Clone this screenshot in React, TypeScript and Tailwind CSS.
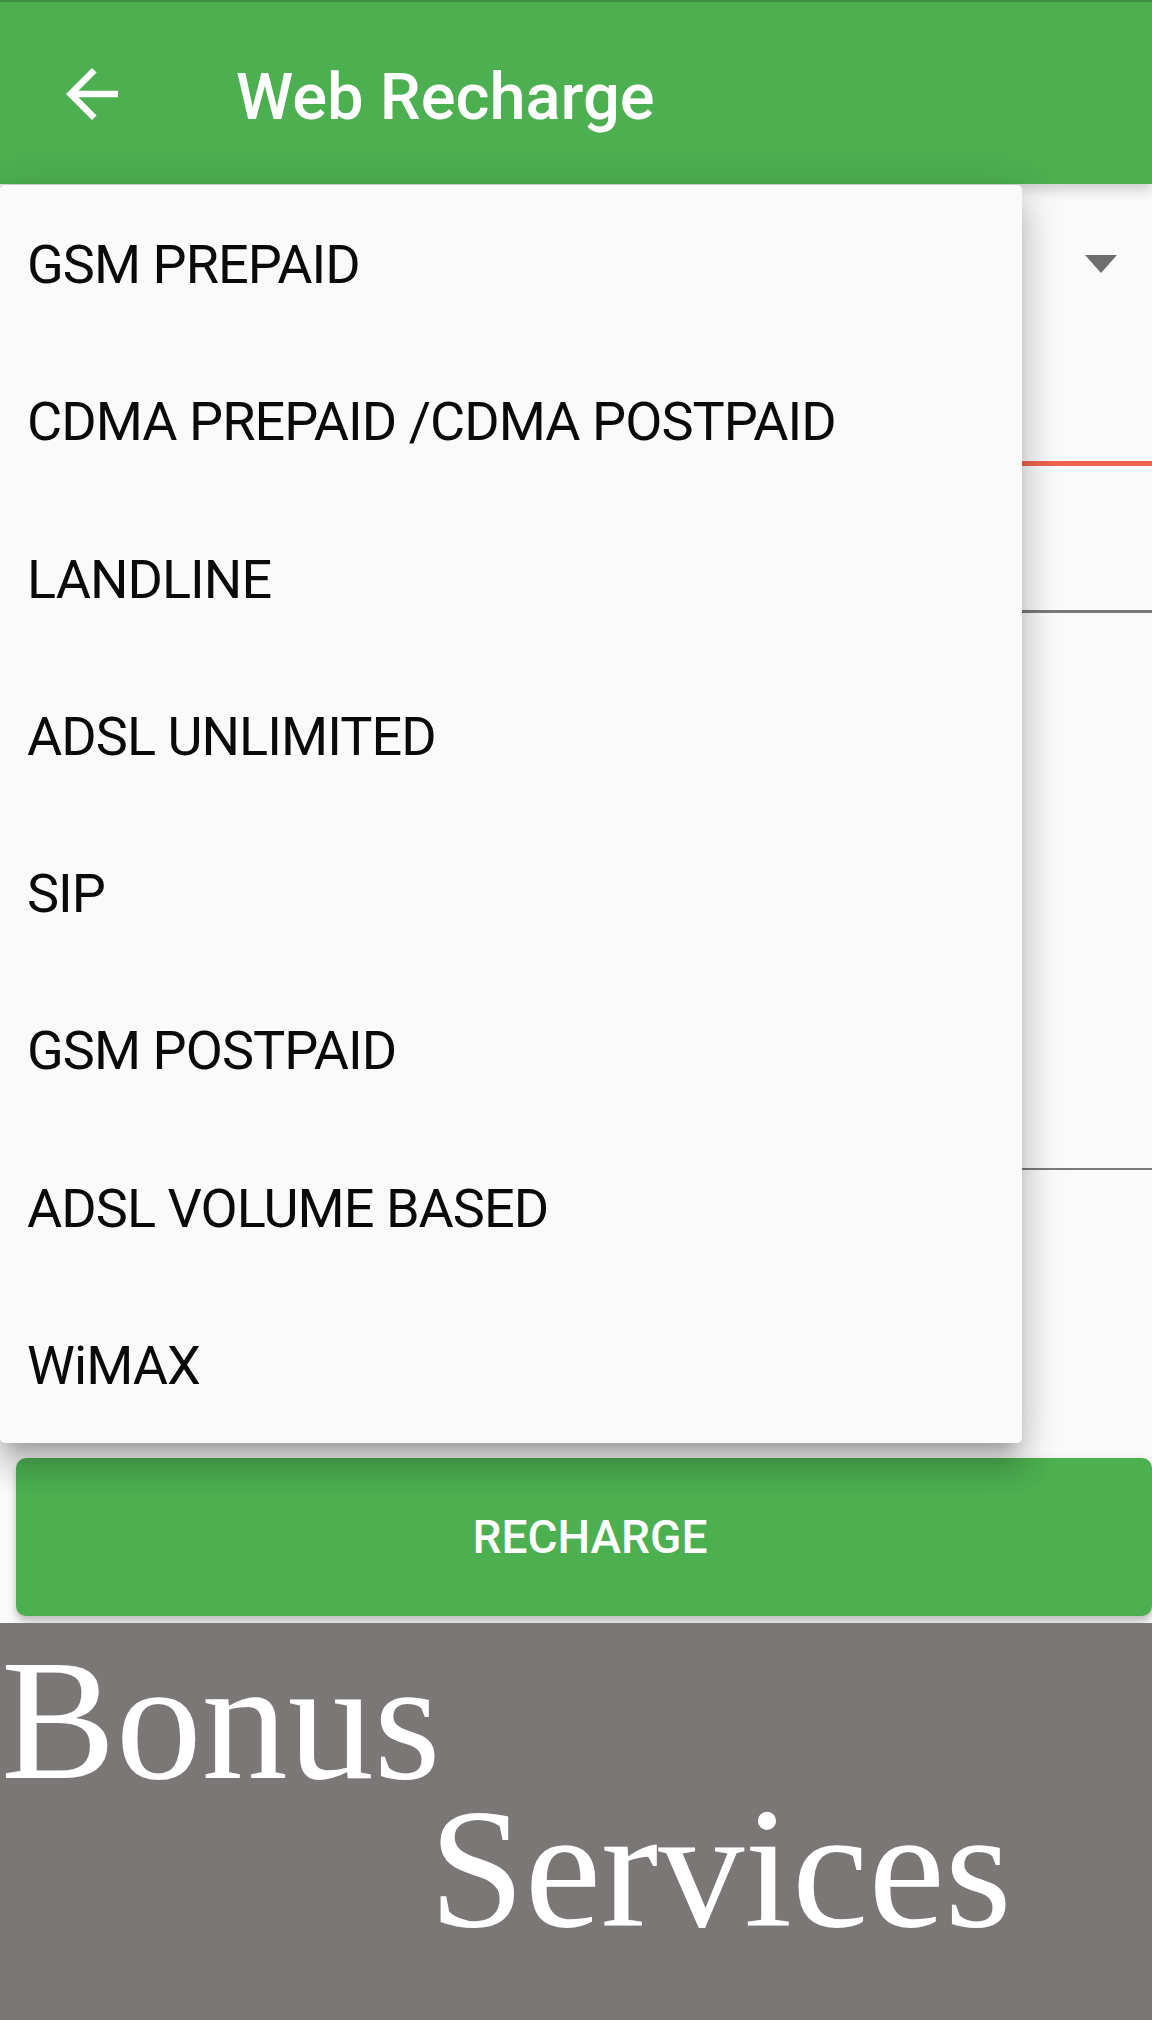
const OPTIONS = [
  "GSM PREPAID",
  "CDMA PREPAID /CDMA POSTPAID",
  "LANDLINE",
  "ADSL UNLIMITED",
  "SIP",
  "GSM POSTPAID",
  "ADSL VOLUME BASED",
  "WiMAX",
];

function BackArrow() {
  return (
    <svg width="78" height="78" viewBox="0 0 24 24" fill="#ffffff">
      <path d="M20 11H7.83l5.59-5.59L12 4l-8 8 8 8 1.41-1.41L7.83 13H20v-2z" />
    </svg>
  );
}

export default function App() {
  return (
    <div className="relative w-[1152px] h-[2020px] overflow-hidden bg-[#fafafa] flex flex-col font-['Roboto',sans-serif]">
      {/* App bar */}
      <header className="relative z-10 h-[184px] shrink-0 flex items-center bg-[#4caf50] border-t-[2px] border-[#3b8e3f] shadow-[0_6px_12px_rgba(0,0,0,0.18)]">
        <div className="ml-[53px] mt-[2px] flex">
          <BackArrow />
        </div>
        <h1 className="ml-[105px] mt-[8px] text-[65px] leading-none font-medium text-white">
          Web Recharge
        </h1>
      </header>

      {/* Form behind the open dropdown */}
      <div className="h-[1274px] shrink-0 flex flex-col">
        <div className="h-[160px] flex items-center justify-end pr-[35px]">
          <svg width="32" height="18" viewBox="0 0 32 18">
            <polygon points="0,0 32,0 16,18" fill="#6e6e6e" />
          </svg>
        </div>
        <div className="h-[122px] border-b-[5px] border-[#ef6450]" />
        <div className="h-[147px] border-b-[3px] border-[#7a7a7a]" />
        <div className="h-[557px] border-b-[2px] border-[#7a7a7a]" />
      </div>

      {/* Recharge button */}
      <button className="ml-[16px] h-[158px] shrink-0 rounded-[10px] bg-[#4caf50] pl-[12px] text-[46px] font-medium text-white shadow-[0_6px_6px_rgba(0,0,0,0.16),0_3px_12px_rgba(0,0,0,0.1)]">
        RECHARGE
      </button>

      {/* Bonus banner */}
      <div className="mt-[7px] flex-1 bg-[#7b7777] pt-[23px] font-['Liberation_Serif',serif] text-[172px] leading-[148px] text-white">
        <div className="pl-[1px]">Bonus</div>
        <div className="pl-[429px]">Services</div>
      </div>

      {/* Open dropdown menu */}
      <div className="absolute z-20 top-[185px] left-0 w-[1022px] h-[1258px] rounded-[5px] bg-[#fafafa] flex flex-col shadow-[0_15px_15px_-9px_rgba(0,0,0,0.2),0_24px_30px_3px_rgba(0,0,0,0.14),0_9px_42px_6px_rgba(0,0,0,0.12)]">
        {OPTIONS.map((opt) => (
          <div key={opt} className="flex-1 flex items-center pl-[27px] pt-[2px] text-[54px] tracking-[-0.95px] text-[#0a0a0a]">
            {opt}
          </div>
        ))}
      </div>
    </div>
  );
}
